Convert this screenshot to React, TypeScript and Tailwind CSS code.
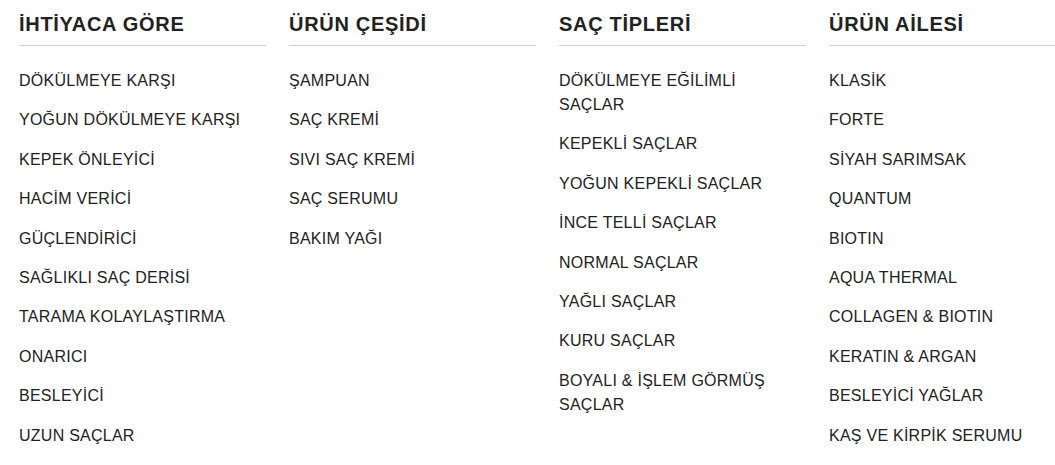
import React from "react";

const columns: { title: string; items: string[] }[] = [
  {
    title: "İHTİYACA GÖRE",
    items: [
      "DÖKÜLMEYE KARŞI",
      "YOĞUN DÖKÜLMEYE KARŞI",
      "KEPEK ÖNLEYİCİ",
      "HACİM VERİCİ",
      "GÜÇLENDİRİCİ",
      "SAĞLIKLI SAÇ DERİSİ",
      "TARAMA KOLAYLAŞTIRMA",
      "ONARICI",
      "BESLEYİCİ",
      "UZUN SAÇLAR",
    ],
  },
  {
    title: "ÜRÜN ÇEŞİDİ",
    items: ["ŞAMPUAN", "SAÇ KREMİ", "SIVI SAÇ KREMİ", "SAÇ SERUMU", "BAKIM YAĞI"],
  },
  {
    title: "SAÇ TİPLERİ",
    items: [
      "DÖKÜLMEYE EĞİLİMLİ SAÇLAR",
      "KEPEKLİ SAÇLAR",
      "YOĞUN KEPEKLİ SAÇLAR",
      "İNCE TELLİ SAÇLAR",
      "NORMAL SAÇLAR",
      "YAĞLI SAÇLAR",
      "KURU SAÇLAR",
      "BOYALI & İŞLEM GÖRMÜŞ SAÇLAR",
    ],
  },
  {
    title: "ÜRÜN AİLESİ",
    items: [
      "KLASİK",
      "FORTE",
      "SİYAH SARIMSAK",
      "QUANTUM",
      "BIOTIN",
      "AQUA THERMAL",
      "COLLAGEN & BIOTIN",
      "KERATIN & ARGAN",
      "BESLEYİCİ YAĞLAR",
      "KAŞ VE KİRPİK SERUMU",
    ],
  },
];

export default function App() {
  return (
    <div
      className="w-[1055px] h-[465px] bg-white overflow-hidden pl-[19px] flex gap-[23px] text-[#222222]"
      style={{ fontFamily: '"Liberation Sans", Arial, sans-serif' }}
    >
      {columns.map((col) => (
        <div key={col.title} className="w-[247px] shrink-0">
          <div className="pt-3 pb-[9px] border-b border-[#cfcfcf] text-[20px] leading-6 font-bold tracking-[0.7px]">
            {col.title}
          </div>
          <ul className="mt-[23px] flex flex-col gap-[15.4px]">
            {col.items.map((it) => (
              <li key={it} className="text-[16px] leading-6 tracking-[0.25px] pr-6">
                {it}
              </li>
            ))}
          </ul>
        </div>
      ))}
    </div>
  );
}
